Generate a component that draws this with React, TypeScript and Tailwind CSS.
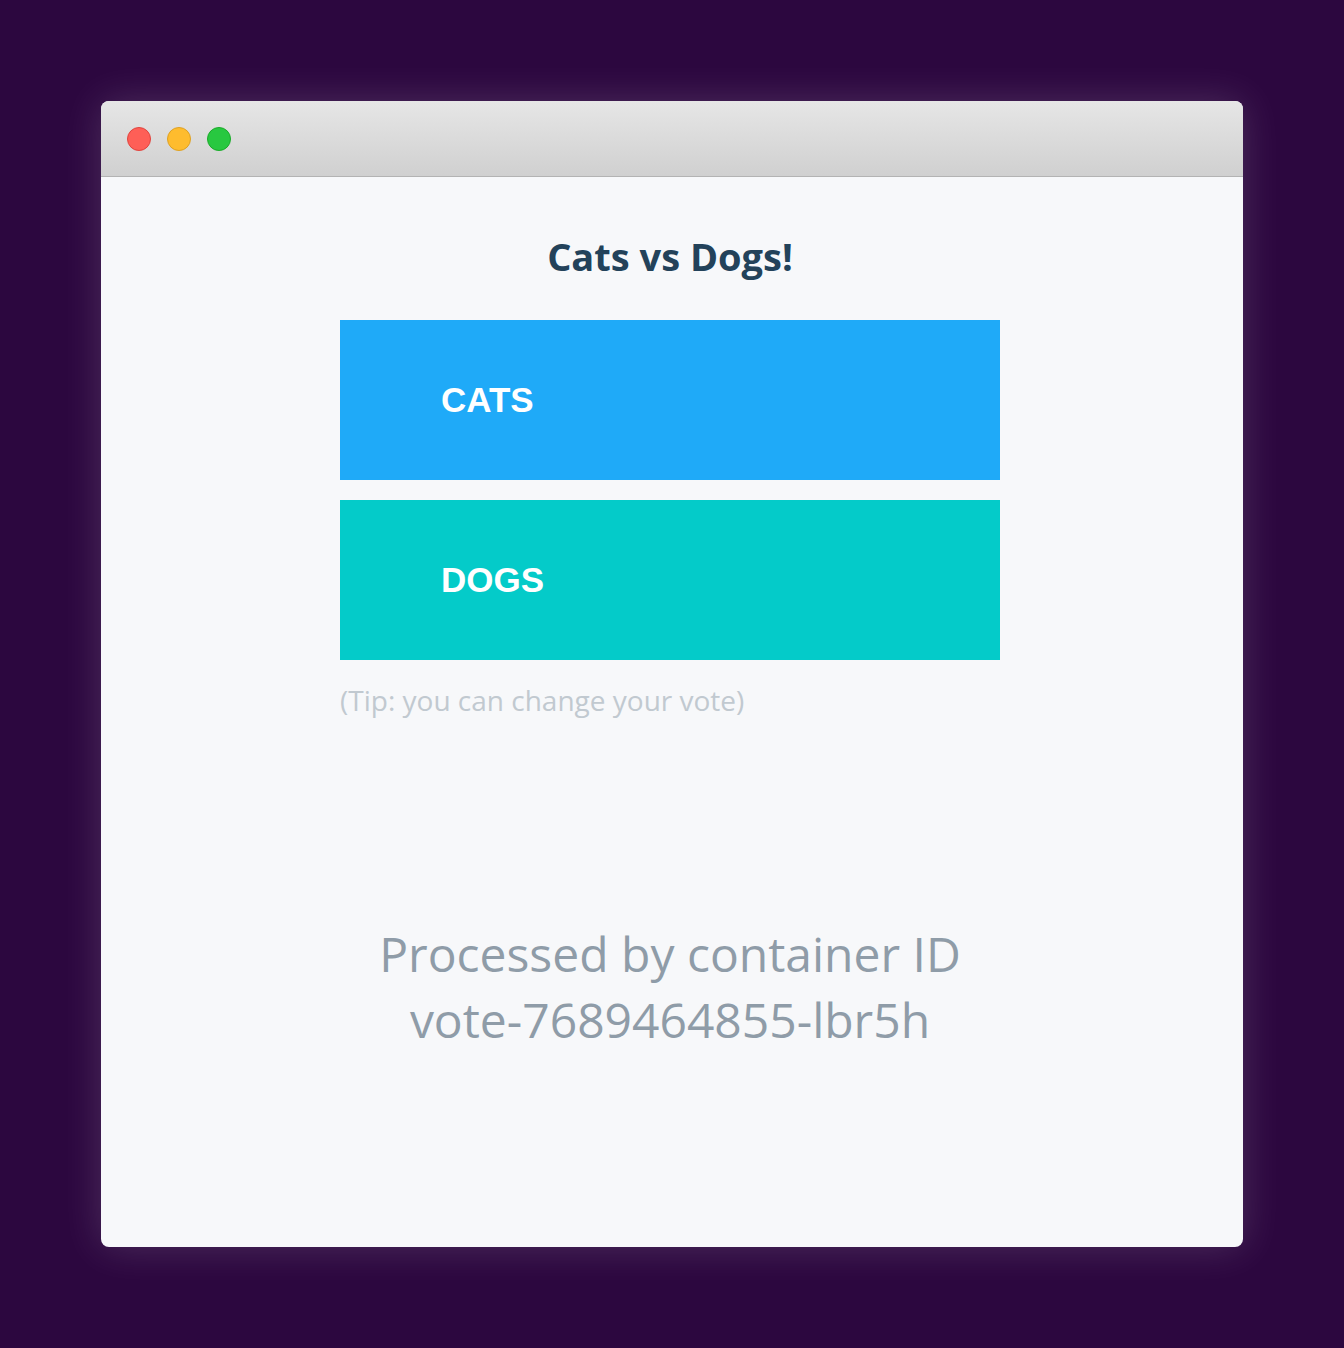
import React from "react";

export default function App() {
  return (
    <div className="w-[1344px] h-[1348px] bg-[#2c073f] p-[101px]">
      <div className="w-[1142px] h-[1146px] rounded-[8px] overflow-hidden bg-[#f7f8fa] shadow-[0_0_40px_rgba(255,255,255,0.16)] flex flex-col">
        <div className="h-[76px] shrink-0 bg-gradient-to-b from-[#e6e6e6] to-[#d0d0d0] border-b border-[#b3b3b3] flex items-center gap-4 pl-[26px]">
          <span className="w-6 h-6 rounded-full bg-[#fe5f57] border border-[#e0443e]" />
          <span className="w-6 h-6 rounded-full bg-[#febc2e] border border-[#dea123]" />
          <span className="w-6 h-6 rounded-full bg-[#28c840] border border-[#1aab29]" />
        </div>
        <div className="flex flex-col items-center pt-[58px] pr-[4px] font-['Open_Sans',sans-serif]">
          <h1 className="text-[38px] leading-[43px] font-bold text-[#23425a]">Cats vs Dogs!</h1>
          <div className="w-[660px] mt-[42px] flex flex-col gap-5">
            <button className="h-[160px] bg-[#1faaf8] text-left pl-[101px] text-white text-[35px] font-bold font-['Liberation_Sans',Arial,sans-serif]">
              CATS
            </button>
            <button className="h-[160px] bg-[#04cbc9] text-left pl-[101px] text-white text-[35px] font-bold font-['Liberation_Sans',Arial,sans-serif]">
              DOGS
            </button>
            <p className="text-[28px] leading-[40px] text-[#c1c9d0]">(Tip: you can change your vote)</p>
          </div>
          <div className="mt-[201px] text-center text-[48px] leading-[66px] text-[#8f9ca8]">
            <p>Processed by container ID</p>
            <p>vote-7689464855-lbr5h</p>
          </div>
        </div>
      </div>
    </div>
  );
}
